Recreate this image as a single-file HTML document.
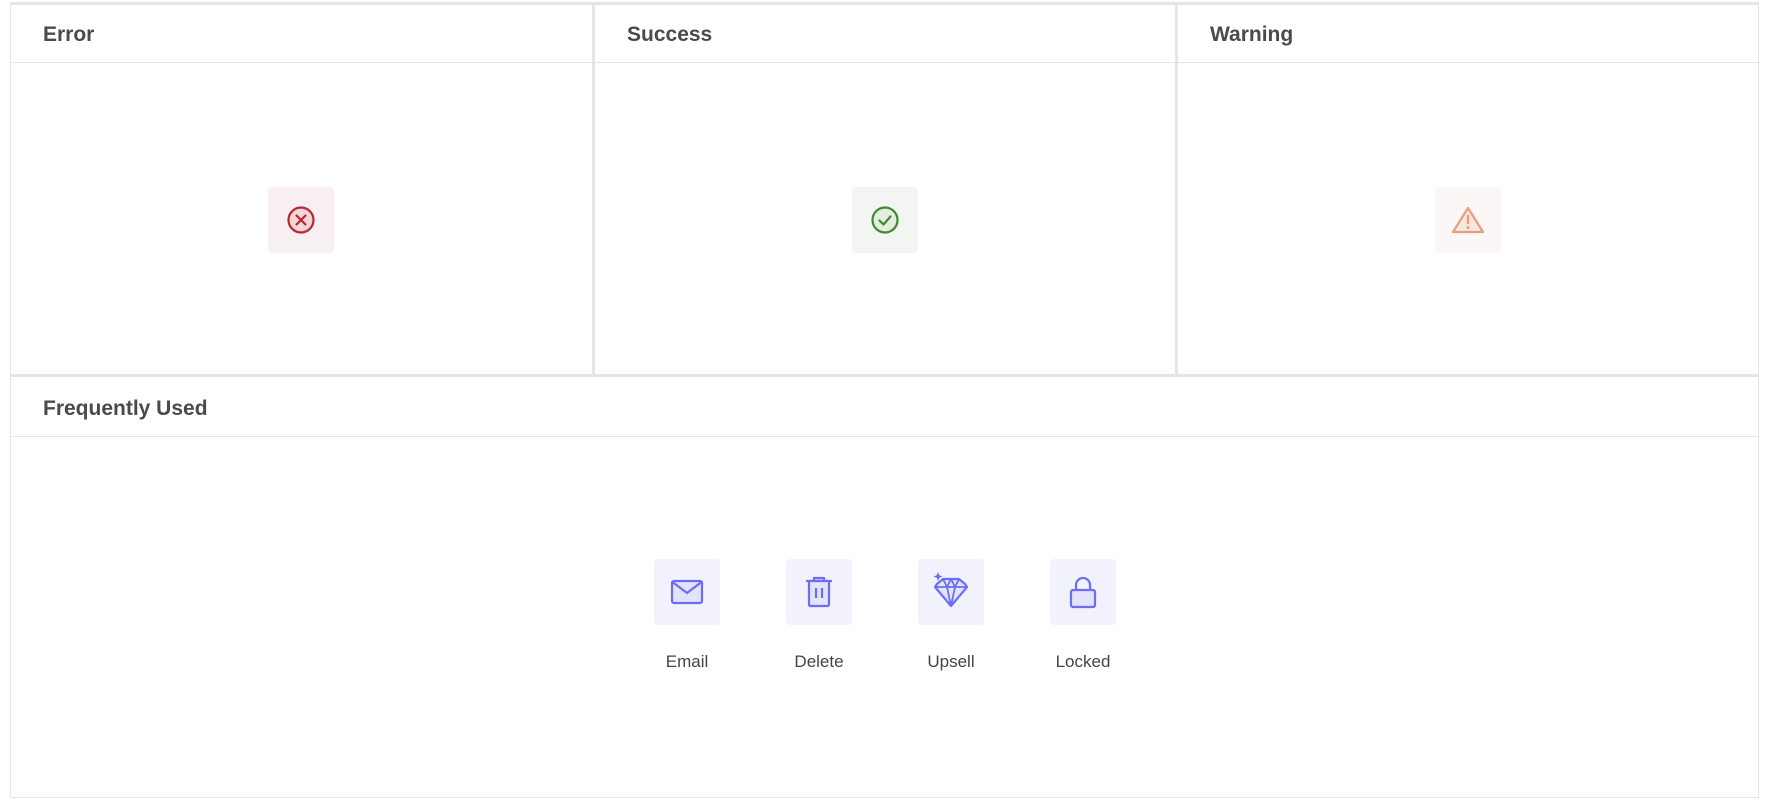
<!DOCTYPE html>
<html><head><meta charset="utf-8"><style>
*{margin:0;padding:0;box-sizing:border-box}
body{width:1776px;height:804px;background:#fff;font-family:"Liberation Sans",sans-serif;position:relative;overflow:hidden}
.line{position:absolute;background:#e5e5e5}
.h{position:absolute;font-weight:bold;font-size:21px;color:#4a4a4a;line-height:24px}
.box{position:absolute;width:66px;height:66px;border-radius:4px;display:flex;align-items:center;justify-content:center}
.lbl{position:absolute;font-size:17px;color:#444;width:132px;text-align:center}
</style></head><body>
<div class="line" style="left:10px;top:2px;width:1749px;height:3px"></div>
<div class="line" style="left:10px;top:2px;width:1px;height:795px"></div>
<div class="line" style="left:1758px;top:2px;width:1px;height:795px"></div>
<div class="line" style="left:10px;top:62px;width:1749px;height:1px"></div>
<div class="line" style="left:592px;top:2px;width:3px;height:373px"></div>
<div class="line" style="left:1175px;top:2px;width:3px;height:373px"></div>
<div class="line" style="left:10px;top:374px;width:1749px;height:3px"></div>
<div class="line" style="left:10px;top:436px;width:1749px;height:1px"></div>
<div class="line" style="left:10px;top:797px;width:1749px;height:1px"></div>

<div class="h" style="left:43px;top:23px">Error</div>
<div class="h" style="left:627px;top:23px">Success</div>
<div class="h" style="left:1210px;top:23px">Warning</div>
<div class="h" style="left:43px;top:397px">Frequently Used</div>

<div class="box" style="left:268px;top:187px;background:#f7eff1">
<svg width="34" height="34" viewBox="0 0 34 34"><circle cx="17" cy="17" r="12.5" fill="#f2d6d8" stroke="#b8262e" stroke-width="2.2"/><path d="M12.5 12.5l9 9M21.5 12.5l-9 9" stroke="#b8262e" stroke-width="2.2" stroke-linecap="round"/></svg></div>
<div class="box" style="left:852px;top:187px;background:#f2f5f2">
<svg width="34" height="34" viewBox="0 0 34 34"><circle cx="17" cy="17" r="12.5" fill="#e3eee0" stroke="#3f8a2e" stroke-width="2.2"/><path d="M11.5 17.5l4 4 7-8" fill="none" stroke="#3f8a2e" stroke-width="2.2" stroke-linecap="round" stroke-linejoin="round"/></svg></div>
<div class="box" style="left:1435px;top:187px;background:#faf7f6">
<svg width="40" height="34" viewBox="0 0 40 34"><path d="M20 5L35 29H5Z" fill="#f9e8e2" stroke="#e99d7c" stroke-width="2.2" stroke-linejoin="round"/><path d="M20 13v7" stroke="#e99d7c" stroke-width="2.4" stroke-linecap="round"/><circle cx="20" cy="24.5" r="1.5" fill="#e99d7c"/></svg></div>

<div class="box" style="left:654px;top:559px;background:#f2f2fd">
<svg width="40" height="34" viewBox="0 0 40 34"><rect x="5" y="6" width="30" height="22" rx="2" fill="#e3e3fb" stroke="#6b6ef5" stroke-width="2.2"/><path d="M5.5 7l14.5 11 14.5-11" fill="none" stroke="#6b6ef5" stroke-width="2.2" stroke-linejoin="round"/></svg></div>
<div class="box" style="left:786px;top:559px;background:#f2f2fd">
<svg width="40" height="40" viewBox="0 0 40 40"><path d="M7 9h26M15 9V6h10v3" fill="none" stroke="#6b6ef5" stroke-width="2.2" stroke-linejoin="round"/><rect x="10" y="9" width="20" height="25" rx="1.5" fill="#e3e3fb" stroke="#6b6ef5" stroke-width="2.2"/><path d="M17 16v10M23 16v10" stroke="#6b6ef5" stroke-width="2.2"/></svg></div>
<div class="box" style="left:918px;top:559px;background:#f2f2fd">
<svg width="44" height="44" viewBox="0 0 44 44"><path d="M8 14l6-5h16l6 5 2 3-16 19L6 17z" fill="#e3e3fb" stroke="#6b6ef5" stroke-width="2.2" stroke-linejoin="round"/><path d="M6 17h32M14 9l4 8 4-8 4 8 4-8M18 17l4 19 4-19" fill="none" stroke="#6b6ef5" stroke-width="1.8" stroke-linejoin="round"/><path d="M9 2l1.3 3.2L13.5 6.5 10.3 7.8 9 11 7.7 7.8 4.5 6.5 7.7 5.2z" fill="#6b6ef5"/></svg></div>
<div class="box" style="left:1050px;top:559px;background:#f2f2fd">
<svg width="40" height="40" viewBox="0 0 40 40"><path d="M13 18v-5a7 7 0 0 1 14 0v5" fill="none" stroke="#6b6ef5" stroke-width="2.2"/><rect x="8" y="18" width="24" height="17" rx="2" fill="#e3e3fb" stroke="#6b6ef5" stroke-width="2.2"/></svg></div>

<div class="lbl" style="left:621px;top:652px">Email</div>
<div class="lbl" style="left:753px;top:652px">Delete</div>
<div class="lbl" style="left:885px;top:652px">Upsell</div>
<div class="lbl" style="left:1017px;top:652px">Locked</div>
</body></html>
